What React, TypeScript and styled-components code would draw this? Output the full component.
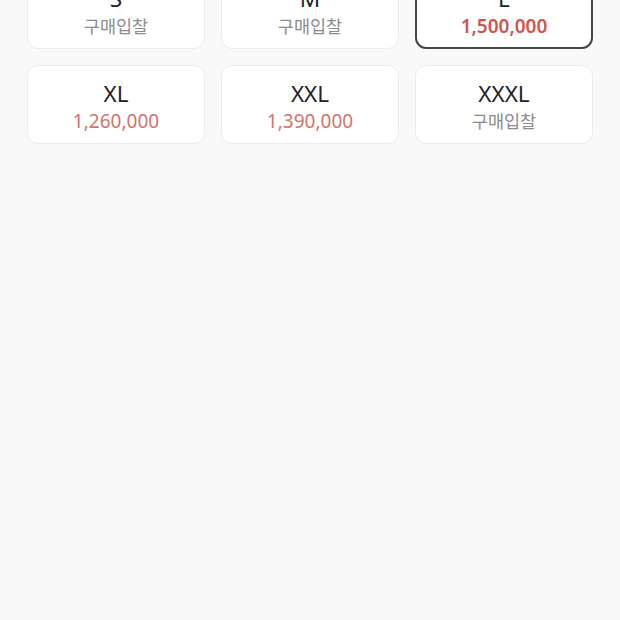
import React from 'react';
import styled, { createGlobalStyle } from 'styled-components';

const GlobalStyle = createGlobalStyle`
  html, body {
    margin: 0;
    padding: 0;
    background: #f9f9f9;
    font-family: "Noto Sans", "Noto Sans CJK KR", sans-serif;
  }
`;

const Page = styled.div`
  min-height: 620px;
  padding: 0 27px;
  overflow: hidden;
`;

const SizeGrid = styled.div`
  display: grid;
  grid-template-columns: repeat(3, 1fr);
  gap: 16px;
  margin-top: -30px;
`;

const SizeCard = styled.div<{ $selected?: boolean }>`
  height: 79px;
  box-sizing: border-box;
  padding-top: 3px;
  background: #ffffff;
  border: ${p => (p.$selected ? '2px solid #474747' : '1px solid #ececec')};
  border-radius: 11px;
  display: flex;
  flex-direction: column;
  align-items: center;
  justify-content: center;
  gap: 2px;
`;

const SizeLabel = styled.div`
  font-family: "Noto Sans", sans-serif;
  font-size: 22.5px;
  line-height: 27px;
  color: #222;
`;

const Price = styled.div<{ $selected?: boolean }>`
  font-family: "Noto Sans", sans-serif;
  font-size: 19px;
  line-height: 24px;
  font-weight: ${p => (p.$selected ? 600 : 400)};
  color: ${p => (p.$selected ? '#d0554b' : '#d0756b')};
`;

const Bid = styled.div`
  font-family: "Noto Sans CJK KR", sans-serif;
  font-size: 17.5px;
  line-height: 24px;
  color: #8c8c8c;
`;

type Size = { label: string; price?: string; selected?: boolean };

const sizes: Size[] = [
  { label: 'S' },
  { label: 'M' },
  { label: 'L', price: '1,500,000', selected: true },
  { label: 'XL', price: '1,260,000' },
  { label: 'XXL', price: '1,390,000' },
  { label: 'XXXL' },
];

const App: React.FC = () => {
  return (
    <>
      <GlobalStyle />
      <Page>
        <SizeGrid>
          {sizes.map(s => (
            <SizeCard key={s.label} $selected={s.selected}>
              <SizeLabel>{s.label}</SizeLabel>
              {s.price ? <Price $selected={s.selected}>{s.price}</Price> : <Bid>구매입찰</Bid>}
            </SizeCard>
          ))}
        </SizeGrid>
      </Page>
    </>
  );
};

export default App;
